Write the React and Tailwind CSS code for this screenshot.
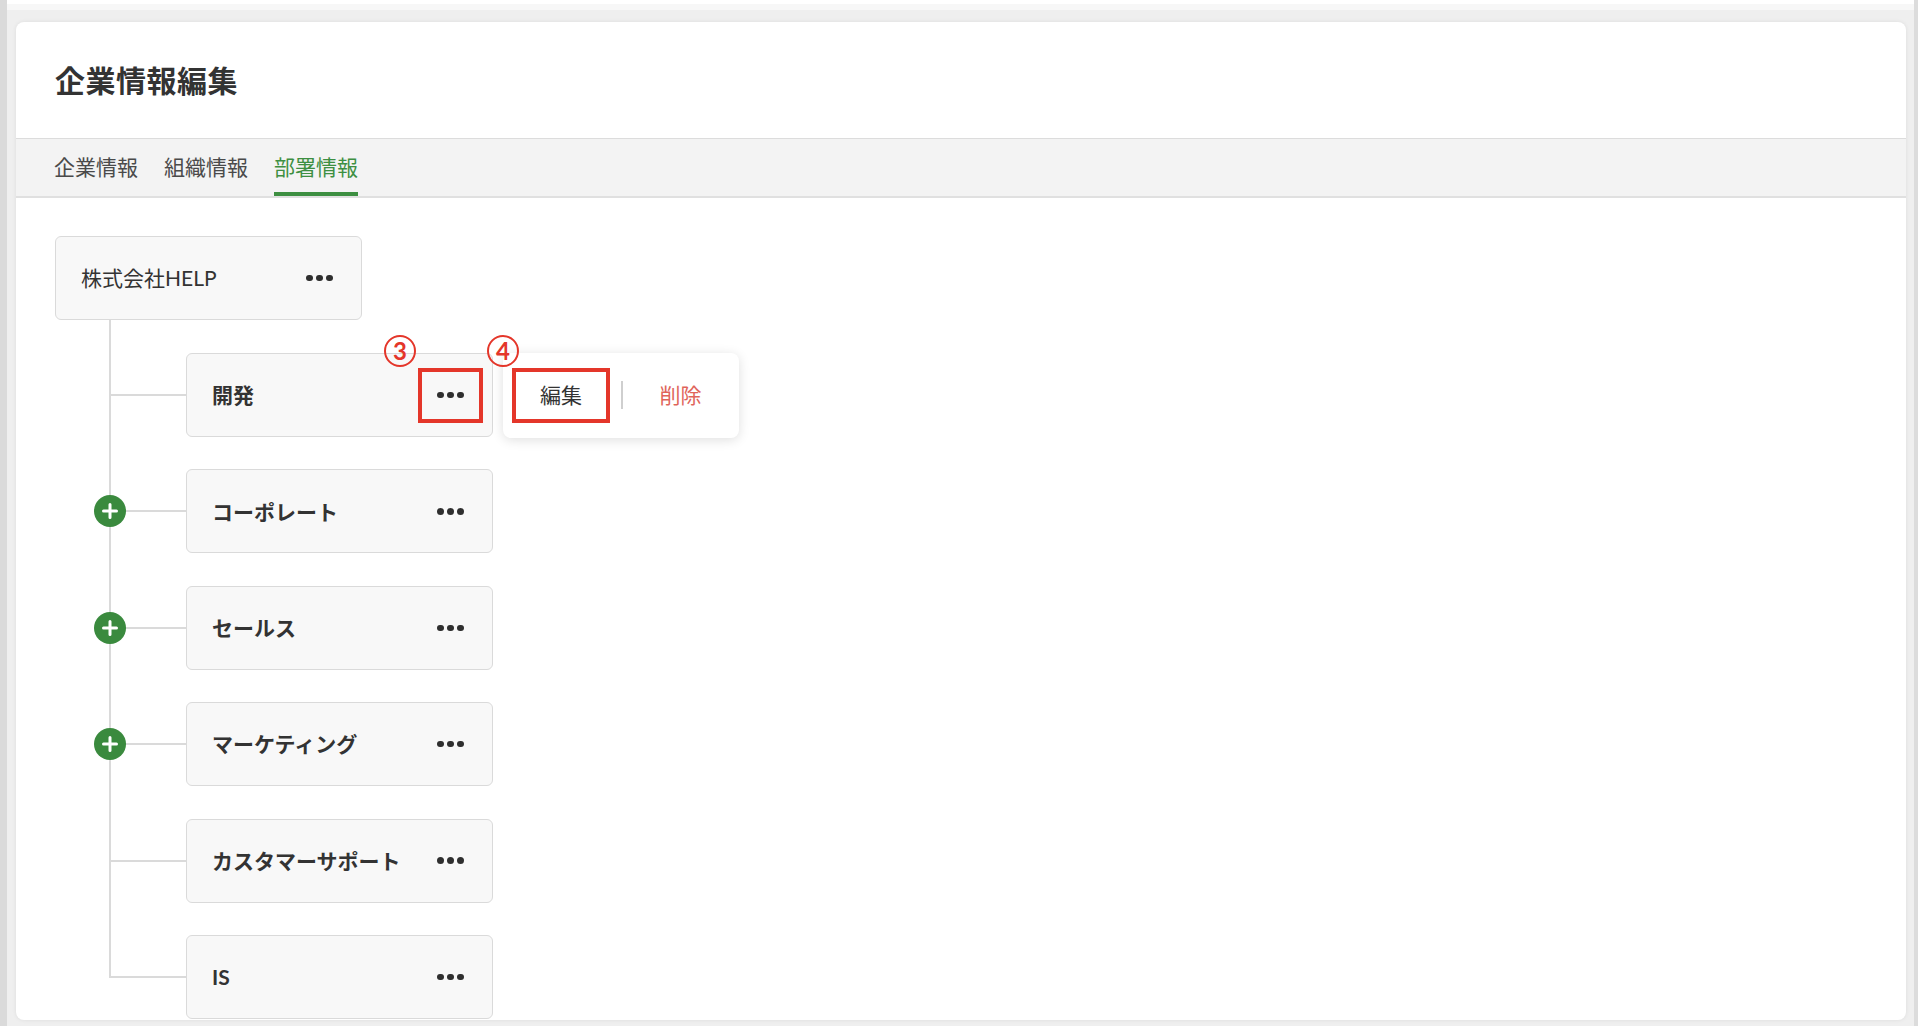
import React from 'react';

const departments = [
  { name: '開発', plus: false, open: true },
  { name: 'コーポレート', plus: true },
  { name: 'セールス', plus: true },
  { name: 'マーケティング', plus: true },
  { name: 'カスタマーサポート', plus: false },
  { name: 'IS', plus: false },
];

const tabs = [
  { label: '企業情報' },
  { label: '組織情報' },
  { label: '部署情報', active: true },
];

// 三点リーダー
const Dots = () => (
  <span className="flex items-center gap-[3.5px]">
    {[0, 1, 2].map((i) => (
      <span key={i} className="w-[6.5px] h-[6.5px] rounded-full bg-[#2f2f2f]" />
    ))}
  </span>
);

// 赤丸の番号（注釈）
const Marker = ({ num, className }) => (
  <span
    className={`absolute w-[32px] h-[32px] rounded-full border-[2.5px] border-[#e4362a] text-[#e4362a] text-[24px] font-bold leading-none flex items-center justify-center ${className}`}
  >
    {num}
  </span>
);

const MenuButton = ({ highlight }) => (
  <div
    className={`relative w-[65px] h-[55px] flex items-center justify-center border-4 ${
      highlight ? 'border-[#e4362a]' : 'border-transparent'
    }`}
  >
    {highlight && <Marker num="3" className="left-[-38px] top-[-37px]" />}
    <Dots />
  </div>
);

const NodeBox = ({ label, bold, highlight }) => (
  <div className="w-[307px] h-[84px] shrink-0 rounded-md border-[1.5px] border-[#dadada] bg-[#f8f8f8] flex items-center justify-between pl-[25px] pr-[9px]">
    <span className={`text-[21px] text-[#333] ${bold ? 'font-bold' : 'font-normal'}`}>{label}</span>
    <MenuButton highlight={highlight} />
  </div>
);

const PlusIcon = () => (
  <svg width="32" height="32" viewBox="0 0 32 32">
    <circle cx="16" cy="16" r="16" fill="#3a8a3e" />
    <path d="M16 9.5v13M9.5 16h13" stroke="#fff" strokeWidth="3" strokeLinecap="round" />
  </svg>
);

const Popup = () => (
  <div className="ml-[10px] h-[85px] rounded-lg bg-white shadow-[0_2px_12px_rgba(0,0,0,0.13)] flex items-center pl-[9px]">
    <div className="relative w-[98px] h-[55px] border-4 border-[#e4362a] flex items-center justify-center text-[21px] text-[#333]">
      <Marker num="4" className="left-[-29px] top-[-37px]" />
      編集
    </div>
    <div className="ml-[11px] w-[1.5px] h-[28px] bg-[#cfcfcf]" />
    <span className="px-[37px] text-[21px] text-[#e0645a]">削除</span>
  </div>
);

export default function App() {
  return (
    <div className="w-[1920px] h-[1026px] overflow-hidden flex bg-[#efefef] font-[family-name:Lato,'Noto_Sans_CJK_JP',sans-serif]">
      <div className="w-[7px] shrink-0 bg-[#dadada]" />

      <div className="flex-1 flex flex-col">
        <div className="h-[4px] bg-white" />
        <div className="h-[6px] bg-[#f7f7f7]" />

        <div className="flex flex-1 pt-[12px]">
          {/* カード */}
          <div className="ml-[9px] w-[1890px] h-[998px] rounded-lg bg-white shadow-[0_0_4px_rgba(0,0,0,0.08)] overflow-hidden flex flex-col">
            <div className="h-[117px] shrink-0 flex items-center pl-[39px] border-b border-[#dcdcdc]">
              <h1 className="text-[30px] font-bold text-[#333] tracking-[0.5px]">企業情報編集</h1>
            </div>

            <div className="h-[59px] shrink-0 bg-[#f3f3f3] border-b-2 border-[#e0e0e0] flex pl-[38px] gap-[26px]">
              {tabs.map((t) => (
                <div
                  key={t.label}
                  className={`h-full flex items-center pt-[3px] border-b-[4px] text-[21px] ${
                    t.active ? 'border-[#3d8f41] text-[#3d8f41]' : 'border-transparent text-[#4a4a4a]'
                  }`}
                >
                  {t.label}
                </div>
              ))}
            </div>

            {/* 部署ツリー */}
            <div className="pt-[38px] pl-[39px]">
              <NodeBox label="株式会社HELP" />

              <div className="relative flex flex-col gap-[32.4px] pt-[33px]">
                <div className="absolute left-[54px] top-0 bottom-[41px] w-[2px] bg-[#dadada]" />
                {departments.map((d) => (
                  <div key={d.name} className="flex items-center h-[84px]">
                    <div className="relative w-[131px] h-full flex items-center shrink-0">
                      <div className="ml-[55px] flex-1 h-[2px] bg-[#dadada]" />
                      {d.plus && (
                        <span className="absolute left-[39px] top-[26px]">
                          <PlusIcon />
                        </span>
                      )}
                    </div>
                    <NodeBox label={d.name} bold highlight={d.open} />
                    {d.open && <Popup />}
                  </div>
                ))}
              </div>
            </div>
          </div>
        </div>
      </div>

      <div className="w-[4px] shrink-0 bg-[#dcdcdc]" />
      <div className="w-[2px] shrink-0 bg-white" />
    </div>
  );
}
